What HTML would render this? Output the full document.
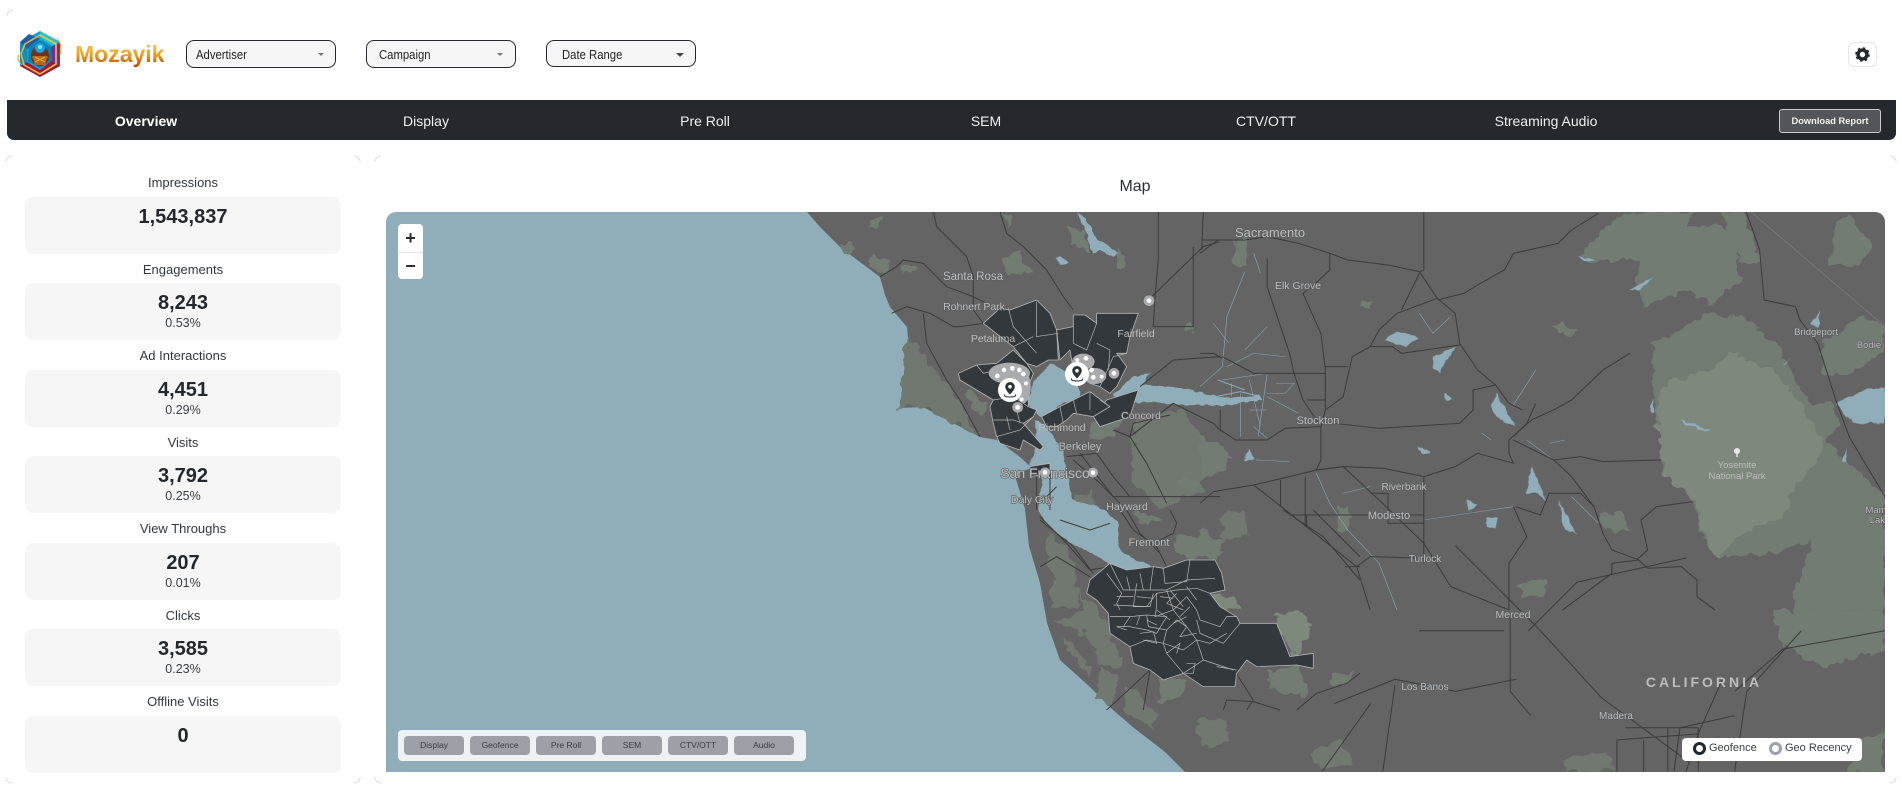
<!DOCTYPE html>
<html lang="en"><head><meta charset="utf-8"><title>Mozayik</title>
<style>
*{box-sizing:border-box}
html,body{margin:0;padding:0;background:#fff}
body{width:1902px;height:793px;position:relative;overflow:hidden;font-family:"Liberation Sans",sans-serif;color:#2b2f33}
.abs{position:absolute}
.dd{position:absolute;top:40px;width:150px;height:28px;background:#f6f6f6;border:1px solid #24272b;border-radius:8px}
.dd span{position:absolute;top:6px;font-size:13px;line-height:15px;color:#222;transform:scaleX(.87);transform-origin:left center;white-space:nowrap}
.dd i{position:absolute;top:12px;width:0;height:0;border-left:3px solid transparent;border-right:3px solid transparent;border-top:3px solid #777}
#nav{position:absolute;left:7px;top:100px;width:1889px;height:40px;background:#25292d;border-radius:0 0 7px 7px}
.n{position:absolute;top:113px;transform:translateX(-50%);font-size:14px;line-height:17px;color:#eef0f1;white-space:nowrap}
#dl{position:absolute;left:1779px;top:109px;width:102px;height:24px;background:#53575b;border:1px solid #c9cbcd;border-radius:3px;color:#f2f2f2;font-size:9.3px;font-weight:bold;text-align:center;line-height:23px;white-space:nowrap}
#gear{position:absolute;left:1848px;top:42px;width:29px;height:25px;border:1px solid #e6e6e6;border-radius:6px;background:#fff}
.lab{position:absolute;left:25px;width:316px;text-align:center;font-size:13px;line-height:16px;color:#33373b}
.card{position:absolute;left:25px;width:316px;height:57px;background:#f6f6f6;border-radius:8px;text-align:center}
.card b{position:absolute;left:0;right:0;top:9px;font-size:20px;line-height:22px;color:#24272b}
.card span{position:absolute;left:0;right:0;top:33px;font-size:12.5px;line-height:15px;color:#3a3e42}
#title{position:absolute;left:1035px;width:200px;top:177px;text-align:center;font-size:16px;line-height:19px;color:#2b2f33}
#map{position:absolute;left:386px;top:212px;width:1499px;height:560px;overflow:hidden;border-radius:10px 10px 0 0;background:#90aeb9}
#map svg{position:absolute;left:0;top:0;display:block}
.land{fill:#646464}.wat{fill:#90aeb9}
.f1{fill:#727c72}.f2{fill:#7e887c}
.f0{fill:#6f786f}
.r{fill:none;stroke:#3b3b3b;stroke-width:1;vector-effect:non-scaling-stroke;stroke-linejoin:round}
.wl{fill:none;stroke:#90aeb9;stroke-width:1.3;vector-effect:non-scaling-stroke}
.dk{fill:#33383c;stroke:#b4b6b7;stroke-width:.8;vector-effect:non-scaling-stroke;stroke-linejoin:round}
.il{fill:none;stroke:#b4b6b7;stroke-width:.7;vector-effect:non-scaling-stroke}
text{font-family:"Liberation Sans",sans-serif;fill:#bdbdbd;text-anchor:middle;paint-order:stroke;stroke:#5a5c5e;stroke-width:1.2px}
#zc{position:absolute;left:398px;top:224px;width:25px;height:55px;background:#fff;border-radius:4px}
#zc div{position:absolute;left:0;width:25px;text-align:center;font-weight:bold;font-size:18px;color:#2b2b2b}
#fb{position:absolute;left:398px;top:730px;width:408px;height:31px;background:#eef2f4;border-radius:4px}
#fb div{position:absolute;top:6px;width:60px;height:19px;background:#9da0a6;border-radius:4px;text-align:center;font-size:8.5px;line-height:19px;color:#3a3d42}
#lg{position:absolute;left:1682px;top:738px;width:180px;height:23px;background:#fff;border-radius:4px;font-size:11px;color:#3a4048}
#lg i{position:absolute;top:4px;width:13px;height:13px;border-radius:50%;background:#fff}
#lg span{position:absolute;top:3px;line-height:14px;white-space:nowrap}
</style></head><body>

<svg class="abs" style="left:0;top:0" width="1902" height="793" fill="none" stroke="#dcdcdc" stroke-width="1">
<path d="M7,16a6,6 0 0 1 6,-6"/>
<path d="M6,162a6,6 0 0 1 6,-6"/><path d="M354,156a6,6 0 0 1 6,6"/><path d="M6,777a6,6 0 0 0 6,6"/><path d="M360,777a6,6 0 0 1 -6,6"/>
<path d="M375,162a6,6 0 0 1 6,-6"/><path d="M1890,156a6,6 0 0 1 6,6"/><path d="M375,777a6,6 0 0 0 6,6"/><path d="M1896,777a6,6 0 0 1 -6,6"/>
</svg>

<svg class="abs" style="left:15px;top:29px" width="50" height="50" viewBox="0 0 50 50">
<path d="M25,2L45,13L45,37L25,48L5,37L5,13Z" fill="#10a3d6"/>
<path d="M25,2L45,13L38,17L25,9Z" fill="#25c0d8"/>
<path d="M5,13L14,5L25,10L12,20Z" fill="#1c5fa8"/>
<path d="M5,37L25,48L45,37L36,32L25,41L12,33Z" fill="#a3163f"/>
<path d="M5,13L12,20L12,33L5,37Z" fill="#0e8ec4"/>
<path d="M45,13L36,18L36,32L45,37Z" fill="#7b2a8f"/>
<path d="M14,19L25,11L36,18L37,31L25,39L13,32Z" fill="#0d7fb0"/>
<ellipse cx="25" cy="27" rx="9" ry="10" fill="#6e3318"/>
<circle cx="25" cy="19" r="5" fill="#1aa6e4"/>
<circle cx="25" cy="18" r="2" fill="#8fe0fa"/>
<path d="M17,27L33,27L30,36L20,36Z" fill="#b5651d"/>
<path d="M20,28L30,33M30,28L20,33" stroke="#e4a93a" stroke-width="1.2"/>
<path d="M25,45L9,36L6,25L10,15L25,6" fill="none" stroke="#f0b429" stroke-width="1.6"/>
<path d="M25,6L41,15L41,35L25,45" fill="none" stroke="#e8c63a" stroke-width="1.6"/>
<path d="M4,26Q1,30 7,36M42,10Q48,16 45,26" fill="none" stroke="#e8a321" stroke-width="1.1"/>
</svg>
<div class="abs" style="left:75px;top:41px;font-size:23px;line-height:26px;font-weight:bold;white-space:nowrap;background:linear-gradient(#fbd060,#ee9a1c 55%,#a84a08);-webkit-background-clip:text;background-clip:text;color:transparent">Mozayik</div>

<div class="dd" style="left:186px"><span style="left:9px">Advertiser</span><i style="left:131px"></i></div>
<div class="dd" style="left:366px"><span style="left:12px">Campaign</span><i style="left:130px"></i></div>
<div class="dd" style="left:546px;height:27px"><span style="left:15px">Date Range</span><i style="left:129px;border-left-width:4px;border-right-width:4px;border-top:4px solid #444"></i></div>

<div id="gear"><svg width="27" height="23" viewBox="0 0 27 23" style="display:block"><circle cx="13.5" cy="11.5" r="4.4" fill="none" stroke="#25282c" stroke-width="3.4"/><circle cx="13.5" cy="11.5" r="6.4" fill="none" stroke="#25282c" stroke-width="1.8" stroke-dasharray="2.5 2.53"/></svg></div>

<div id="nav"></div>
<div class="n" style="left:146px;font-weight:bold;color:#fff">Overview</div>
<div class="n" style="left:426px">Display</div>
<div class="n" style="left:705px">Pre Roll</div>
<div class="n" style="left:986px">SEM</div>
<div class="n" style="left:1266px">CTV/OTT</div>
<div class="n" style="left:1546px">Streaming Audio</div>
<div id="dl">Download Report</div>

<div class="lab" style="top:175px">Impressions</div>
<div class="card" style="top:197px"><b>1,543,837</b></div>
<div class="lab" style="top:262px">Engagements</div>
<div class="card" style="top:283px"><b>8,243</b><span>0.53%</span></div>
<div class="lab" style="top:348px">Ad Interactions</div>
<div class="card" style="top:370px"><b>4,451</b><span>0.29%</span></div>
<div class="lab" style="top:435px">Visits</div>
<div class="card" style="top:456px"><b>3,792</b><span>0.25%</span></div>
<div class="lab" style="top:521px">View Throughs</div>
<div class="card" style="top:543px"><b>207</b><span>0.01%</span></div>
<div class="lab" style="top:608px">Clicks</div>
<div class="card" style="top:629px"><b>3,585</b><span>0.23%</span></div>
<div class="lab" style="top:694px">Offline Visits</div>
<div class="card" style="top:716px"><b>0</b></div>

<div id="title">Map</div>

<div id="map">
<svg width="1499" height="560" viewBox="386 212 1499 560" style="filter:blur(.35px)">
<defs>
<filter id="rough" filterUnits="userSpaceOnUse" x="386" y="212" width="1499" height="560">
<feTurbulence type="fractalNoise" baseFrequency=".09" numOctaves="2" seed="4"/>
<feDisplacementMap in="SourceGraphic" scale="14" xChannelSelector="R" yChannelSelector="G"/>
</filter>
<filter id="rough2" filterUnits="userSpaceOnUse" x="386" y="212" width="1499" height="560">
<feTurbulence type="fractalNoise" baseFrequency=".12" numOctaves="2" seed="9"/>
<feDisplacementMap in="SourceGraphic" scale="5" xChannelSelector="R" yChannelSelector="G"/>
</filter>
</defs>
<!-- land -->
<polygon class="land" points="807,212 820,227 840,247 860,262 880,277 885,295 890,307 907,327 908,338 900,408 923,407 953,423 980,437 997,440 1020,457 1032,468 1020,472 1016,479 1025,509 1029,546 1040,583 1047,623 1060,660 1090,687 1113,710 1134,728 1165,752 1185,772 1885,772 1885,212"/>

<!-- forests -->
<g filter="url(#rough)">
<g transform="scale(1.213)">
<polygon class="f0" points="862,440 880,450 888,480 874,490 866,465"/>
<polygon class="f0" points="892,490 915,515 925,550 908,548 895,520"/>
<polygon class="f0" points="930,565 955,590 948,600 925,585"/>
<polygon class="f0" points="985,595 1010,590 1015,612 990,615"/>
<polygon class="f0" points="935,345 975,338 1000,370 990,405 955,420 932,395"/>
<polygon class="f0" points="1005,425 1025,420 1030,440 1008,445"/>
<polygon class="f0" points="1080,620 1105,610 1115,630 1090,634"/>
<polygon class="f0" points="1290,625 1325,620 1330,636 1290,636"/>
<polygon class="f1" points="1530,610 1554,605 1554,636 1525,636"/>
<polygon class="f0" points="1000,536 1025,532 1025,552 1005,556"/>
<polygon class="f0" points="880,412 900,405 908,435 888,440"/>
<polygon class="f1" points="1460,503 1554,503 1554,535 1500,550 1470,530"/>
</g>

<g transform="translate(1200,210) scale(.4477,.3333)">
<polygon class="f1" points="1010,400 1060,370 1130,310 1210,320 1290,400 1350,560 1430,640 1400,690 1430,740 1500,820 1530,860 1530,1200 1320,1200 1370,980 1300,1030 1160,1040 1120,980 1100,860 1030,780 1010,520"/>
<polygon class="f2" points="1025,560 1050,510 1130,490 1190,430 1290,490 1330,560 1395,690 1370,770 1330,830 1300,920 1200,980 1160,1040 1125,990 1110,880 1040,800 1020,680"/>
<polygon class="f1" points="850,150 880,80 950,10 1100,5 1090,50 1180,50 1200,130 1210,210 1140,280 1090,240 990,290 975,200 980,150"/>
<polygon class="f1" points="1160,5 1215,5 1250,150 1210,155"/>
<polygon class="f1" points="1420,40 1450,15 1500,100 1480,170 1410,160"/>
<polygon class="f1" points="1380,420 1470,320 1530,340 1530,420 1450,490 1400,500"/>
<polygon class="f1" points="78,90 105,90 105,165 78,165"/>
<polygon class="f1" points="0,670 40,700 70,740 30,800 0,800"/>
<polygon class="f1" points="0,960 50,990 40,1050 0,1040"/>
<polygon class="f1" points="790,340 845,355 830,380 800,365"/>
<polygon class="f1" points="890,915 940,900 965,960 900,965"/>
<polygon class="f1" points="710,1125 770,1105 770,1160 725,1160"/>
<polygon class="f1" points="1350,585 1410,570 1420,640 1385,670"/>
<polygon class="f1" points="365,280 380,280 380,295 365,295"/>
<polygon class="f1" points="305,880 330,900 330,965 310,965"/>
</g>

<g transform="translate(780,210) scale(.3333)">
<polygon class="f0" points="385,385 500,520 600,680 520,640 430,590 360,595"/>
<polygon class="f1" points="660,140 720,130 750,190 690,200"/>
<polygon class="f1" points="860,50 900,60 940,130 880,100"/>
<polygon class="f1" points="180,105 220,105 215,130 190,130"/>
<polygon class="f1" points="360,170 410,165 405,185 370,190"/>
<polygon class="f1" points="270,130 330,160 320,190 270,170"/>
<polygon class="f1" points="280,25 300,25 300,50 280,50"/>
<polygon class="f1" points="660,5 700,10 690,60"/>
<polygon class="f1" points="930,640 1030,630 1000,690 940,680"/>
<polygon class="f1" points="1000,120 1040,140 1030,180 1005,170"/>
<polygon class="f1" points="1215,340 1235,340 1235,365 1215,365"/>
<polygon class="f1" points="560,540 620,580 610,610 580,600"/>
<polygon class="f1" points="1200,800 1260,810 1250,840 1210,840"/>
</g>

<g transform="translate(1040,510) scale(.3333)">
<polygon class="f1" points="400,80 500,80 550,130 440,150 400,120"/>
<polygon class="f1" points="280,5 370,20 320,45"/>
<polygon class="f2" points="490,230 540,260 590,265 595,295 530,305 500,270"/>
<polygon class="f2" points="700,310 790,305 815,350 765,450 740,400"/>
<polygon class="f0" points="30,200 130,240 100,300 40,300"/>
<polygon class="f0" points="40,330 140,300 175,360 120,370"/>
<polygon class="f0" points="70,390 130,430 160,510 95,440"/>
<polygon class="f0" points="180,470 230,500 220,590 170,560"/>
<polygon class="f1" points="360,515 440,510 430,560 360,575"/>
<polygon class="f1" points="680,490 780,470 800,555 700,540"/>
<polygon class="f1" points="870,490 940,490 920,520 880,520"/>
</g>
</g>

<!-- water -->
<g filter="url(#rough2)">
<g class="wat">
<polygon points="1050,363 1077,377 1080,397 1057,407 1053,417 1040,417 1027,403 1033,383"/>
<polygon points="1030,468 1040,470 1042,480 1038,510 1052,530 1075,545 1100,558 1118,570 1140,580 1155,578 1150,565 1125,555 1118,545 1120,525 1105,510 1090,505 1072,500 1067,470 1062,450 1045,425 1035,420 1036,445"/>
<polygon points="1113,395 1133,377 1150,373 1143,385 1180,388 1200,392 1225,398 1260,395 1262,400 1225,406 1170,404 1130,402"/>
<polygon points="1077,213 1086,218 1098,240 1118,252 1114,257 1100,250 1092,254 1088,236"/>
<polygon points="1055,258 1062,256 1068,263 1060,265"/>
</g>
<g transform="translate(1200,210) scale(.4477,.3333)">
<g class="wat">
<polygon points="410,390 440,365 490,380 460,410"/>
<polygon points="520,440 570,410 535,490 520,470"/>
<polygon points="650,590 660,550 705,650 670,630"/>
<polygon points="730,850 740,770 775,870 750,850"/>
<polygon points="800,870 840,970 815,960"/>
<polygon points="1420,580 1480,540 1530,530 1530,640 1460,640"/>
<polygon points="485,710 515,725 495,735"/>
<polygon points="545,550 565,565 550,575"/>
<polygon points="595,870 620,885 600,905"/>
<polygon points="640,925 665,925 660,955 640,950"/>
<polygon points="100,750 120,750 110,715"/>
<polygon points="1365,345 1385,305 1380,350"/>
<polygon points="1075,630 1140,660 1130,665 1080,640"/>
<polygon points="960,240 1015,200 985,240"/>
<polygon points="1005,600 1015,565 1015,610"/>
<polygon points="845,140 885,150 860,155"/>
<polygon points="1300,465 1325,440 1305,463"/>
<polygon points="1435,760 1445,715 1445,760"/>
</g>
</g>
</g>
<g transform="translate(1200,210) scale(.4477,.3333)">
<g class="wl">
<path d="M100,185L60,320L50,470L0,530"/>
<path d="M120,130L135,190M30,340L65,400"/>
<path d="M50,510L150,490L130,680M90,550L90,680M110,510L135,650M150,560L220,610M120,650L150,685M60,470L120,430L190,440M100,420L150,350M70,560L70,520M110,600L150,600M170,520L210,520L190,550L150,550"/>
<path d="M0,570L90,545L135,560M40,510L100,540" style="stroke-width:3"/>
<path d="M490,310L520,370L560,320M730,690L790,750M700,585L750,480M650,690L630,670M780,700L815,690"/>
<path d="M260,790L290,880L330,960L400,1060L440,1200M500,930L600,910L700,890M830,860L890,940M320,850L380,830M125,750L200,755"/>
</g>
</g>

<!-- roads -->
<g transform="translate(1200,210) scale(.4477,.3333)">
<path class="r" d="M500,5L500,180L490,185L420,165L330,150L290,130L220,100L150,80L100,90L40,90L0,130"/>
<path class="r" d="M290,130L290,180L250,230L230,250L270,370L280,480L280,600L270,650L270,750L260,780L200,800L120,825L30,845L0,880"/>
<path class="r" d="M150,145L150,230L200,430L210,490L230,570L265,640"/>
<path class="r" d="M490,185L530,265L570,310L580,400L620,480L660,525L690,580L720,600"/>
<path class="r" d="M530,265L440,310L400,360L380,410M490,190L450,300"/>
<path class="r" d="M890,10L830,60L800,100L700,130L680,180L620,225L590,250L530,270"/>
<path class="r" d="M580,405L450,430L430,410L380,410L340,440L320,560L280,600"/>
<path class="r" d="M300,640L400,655L580,640L610,600L610,540L660,525"/>
<path class="r" d="M960,430L900,480L830,570L790,600L740,630L690,690L690,730L700,760L620,730L570,770L500,800L410,775L320,770L260,780"/>
<path class="r" d="M750,580L730,640L700,680"/>
<path class="r" d="M790,750L850,740L900,755L1030,750"/>
<path class="r" d="M700,690L790,750L830,800L880,890L900,970L920,1020L980,1050L1000,1075L1075,1070L1110,1110L1110,1160L1150,1200"/>
<path class="r" d="M1100,875L1020,890L985,930L1000,1020L975,1050"/>
<path class="r" d="M1220,5L1250,120L1260,270L1330,290L1340,330L1380,400L1420,570L1450,680L1490,770L1530,860"/>
<path class="r" d="M980,1050L920,1060L920,1090L810,1200"/>
<path class="r" d="M260,780L320,770L400,870L500,1000L560,1130L690,1200"/>
<path class="r" d="M120,825L200,910L350,1070L380,1200"/>
<path class="r" d="M350,1070L380,1040L500,1045L500,1000M500,800L500,1060"/>
<path class="r" d="M200,915L500,915M420,850L420,940L500,940M380,850L420,850"/>
<path class="r" d="M700,890L730,980L690,1060L690,1200"/>
<path class="r" d="M235,800L235,950M180,810L180,890"/>
<path class="r" d="M50,440L120,490L280,490M0,430L30,430L50,445M240,570L280,570M280,470L330,470M45,600L45,660L80,690L150,690L190,655L270,650"/>
<path class="r" d="M705,890L760,915L780,850L850,850L880,890"/>
<path fill="none" stroke="#7c7c7c" stroke-width=".7" vector-effect="non-scaling-stroke" d="M1230,5L1530,350"/>
</g>
<g transform="translate(780,210) scale(.3333)">
<path class="r" d="M460,5L470,50L560,140L580,200L580,300L610,340"/>
<path class="r" d="M660,5L680,70L730,110L800,180L850,260L880,300"/>
<path class="r" d="M1105,270L1270,110L1320,95M1135,5L1135,150L1125,260L1120,350L1240,350L1240,110M1270,5L1265,120M1265,90L1320,90"/>
<path class="r" d="M300,200L350,170L370,150L430,160L480,210L500,230L580,260L640,290"/>
<path class="r" d="M335,310L380,290L450,310L520,350L540,350L610,340"/>
<path class="r" d="M430,310L440,400L500,510L540,570L600,680"/>
<path class="r" d="M1000,660L1050,680L1100,760L1160,880M1320,660L1300,640L1180,580L1050,680L1060,640L1170,615M1080,530L1180,450L1320,440"/>
<path class="r" d="M860,740L950,730L1000,800L1050,860M880,750L960,820L1020,880M900,730L1000,860M810,780L810,900M770,800L770,900M1000,860L1320,860M830,830L780,880"/>
</g>
<g transform="translate(1040,510) scale(.3333)">
<path class="r" d="M0,20L80,100L150,180L210,170M0,30L100,110L160,190M0,170L50,140L150,200M210,40L150,60L60,30M240,0L280,60L350,110L380,170M260,0L300,70L360,130M390,0L410,40L400,70L340,100"/>
<path class="r" d="M730,0L850,80L960,210M750,15L960,15M800,15L800,50M820,0L960,140M915,170L960,170M530,400L640,570L620,600M200,600L330,480M330,480L310,600M550,600L560,570L640,575L720,600M770,600L830,550L920,520L960,490"/>
</g>
<g transform="scale(1.213)">
<path class="r" d="M1200,450L1270,520L1320,575L1392,628M1245,505L1245,570L1262,590M1170,520L1240,520M1260,520L1300,480L1390,460"/>
<path class="r" d="M1430,636L1440,570L1485,520M1333,636L1333,610L1400,605L1420,560M1400,605L1390,636"/>
<path class="r" d="M1150,565L1140,636M1090,636L1130,580M1100,580L1150,560L1200,570L1250,560M1380,636L1385,600L1430,590M1430,570L1470,535L1554,520"/>
<path class="r" d="M1340,600L1400,600L1400,636M1355,610L1355,636M1375,600L1375,636"/>
</g>

<!-- dark regions north -->
<g transform="translate(780,210) scale(.3333)">
<path class="dk" d="M610,340L660,295L690,300L770,270L810,310L830,360L835,450L805,450L770,470L740,460L700,410Z"/>
<path class="dk" d="M535,490L590,465L650,460L700,420L740,460L760,490L745,530L745,590L770,600L760,620L730,640L790,710L780,720L730,690L720,720L660,700L650,680L640,640L630,590L640,570L590,540L540,510Z"/>
<path class="dk" d="M830,360L880,350L880,315L915,315L950,340L950,310L1075,310L1050,380L1040,430L1010,430L1040,470L1010,530L990,550L960,530L930,520L880,480L870,420L840,450Z"/>
<path class="dk" d="M1075,540L1050,620L1020,630L960,650L940,620L980,570Z"/>
<path class="dk" d="M785,620L840,590L880,570L930,545L990,590L940,620L880,610L860,630L830,650L800,650Z"/>
<path class="dk" d="M750,770L810,760L810,790L750,800Z"/>
<path class="il" d="M685,295L700,350L770,430M770,275L770,380L835,370M700,410L760,380M590,465L610,490L650,480M640,570L700,560L745,590M640,630L700,630L730,640M650,680L720,660L760,620M680,620L690,660M710,600L720,640"/>
<path class="il" d="M880,350L880,400L920,420L950,340M950,400L990,420L985,480M960,530L1000,440L1040,430M880,570L890,610M930,545L930,600M960,570L990,590M840,590L850,640"/>
</g>

<!-- dark region south -->
<g transform="translate(1040,510) scale(.3333)">
<path class="dk" d="M210,160L260,180L340,170L370,175L440,150L525,150L545,190L555,240L510,250L540,290L590,320L600,340L710,340L750,440L820,430L820,475L770,465L650,470L620,450L590,490L585,530L490,530L430,490L370,510L330,480L280,460L270,410L210,370L205,310L170,270L140,250L150,210Z"/>
<path class="il" d="M210,160L250,240L330,240L380,240L440,210L525,205M200,190L245,250L230,280L240,300M290,220L280,290L330,290L340,250M340,170L330,240M370,175L375,220L440,215L450,150"/>
<path class="il" d="M220,285L320,290L350,250L410,240L470,235L510,250M350,250L350,290L345,320L400,300L440,260L470,300L480,330L540,350L560,320L590,320M380,240L400,300L440,350L470,390L510,400L560,370"/>
<path class="il" d="M210,320L270,320L320,315L380,320L350,370L320,360L270,350L230,350L260,360M270,320L250,350M320,315L325,350L380,360L410,330L440,350L420,380L470,370M380,360L370,400L430,420L470,390"/>
<path class="il" d="M270,410L320,390L370,400L380,430L420,400L410,430M470,390L490,450L430,490M490,450L580,480M380,430L430,490M470,330L480,370L550,400L600,340"/>
<path class="il" d="M440,460L465,460L460,490L435,490M530,470L590,480M300,370L340,365L350,400L310,390"/>
<path class="il" d="M260,200L270,240M300,190L310,240M230,260L280,260M290,260L340,265M360,260L400,265M390,240L430,290M410,250L380,280M440,230L470,270M380,280L430,300M350,300L390,330M450,290L420,320M400,340L440,320M320,330L350,345M300,315L290,345"/>
</g>

<!-- labels -->
<text x="1270" y="237" font-size="13">Sacramento</text>
<text x="1298" y="289" font-size="10.5" fill="#a4a4a4">Elk Grove</text>
<text x="1318" y="424" font-size="11" fill="#c0c0c0">Stockton</text>
<text x="1404" y="490" font-size="10" fill="#969696">Riverbank</text>
<text x="1389" y="519" font-size="11" fill="#c0c0c0">Modesto</text>
<text x="1425" y="562" font-size="10" fill="#969696">Turlock</text>
<text x="1737" y="468" font-size="9.5" fill="#b4b8b0" style="stroke:none">Yosemite</text>
<text x="1737" y="479" font-size="9.5" fill="#b4b8b0" style="stroke:none">National Park</text>
<circle cx="1737" cy="451" r="3" fill="#e8e8e8"/><rect x="1736.3" y="453" width="1.4" height="4" fill="#e8e8e8"/>
<text x="1816" y="335" font-size="9.5" fill="#999">Bridgeport</text>
<text x="1869" y="348" font-size="9.5" fill="#999">Bodie</text>
<text x="1880" y="513" font-size="9.5" fill="#999">Mamm</text>
<text x="1880" y="523" font-size="9.5" fill="#999">Lake</text>
<text x="973" y="280" font-size="11.5" fill="#b8b8b8">Santa Rosa</text>
<text x="974" y="310" font-size="10.5" fill="#9a9a9a">Rohnert Park</text>
<text x="993" y="342" font-size="10.5" fill="#8e8e8e" style="stroke:none">Petaluma</text>
<text x="1136" y="337" font-size="10.5" fill="#808080" style="stroke:none">Fairfield</text>
<text x="1141" y="419" font-size="10.5" fill="#a4a4a4">Concord</text>
<text x="1062" y="431" font-size="10.5" fill="#777" style="stroke:none">Richmond</text>
<text x="1080" y="450" font-size="11" fill="#a8a8a8">Berkeley</text>
<text x="1045" y="478" font-size="14" fill="#c4c4c4">San Francisco</text>
<text x="1032" y="503" font-size="10.5" fill="#8e8e8e">Daly City</text>
<text x="1127" y="510" font-size="10.5" fill="#b0b0b0">Hayward</text>
<text x="1149" y="546" font-size="11" fill="#b0b0b0">Fremont</text>
<text x="1425" y="690" font-size="10" fill="#9a9a9a">Los Banos</text>
<text x="1616" y="719" font-size="10" fill="#9a9a9a">Madera</text>
<text x="1513" y="618" font-size="10.5" fill="#a4a4a4">Merced</text>
<text x="1704" y="687" font-size="14" font-weight="bold" letter-spacing="3" fill="#8f8f8f" style="stroke:none">CALIFORNIA</text>

<!-- markers -->
<g transform="translate(920,270) scale(.3333)">
<g fill="#a9abae">
<ellipse cx="268" cy="310" rx="62" ry="32"/><ellipse cx="310" cy="350" rx="22" ry="50"/>
<ellipse cx="490" cy="275" rx="34" ry="24"/><ellipse cx="525" cy="318" rx="34" ry="24"/>
<circle cx="293" cy="412" r="16"/><circle cx="375" cy="607" r="15"/><circle cx="519" cy="608" r="15"/><circle cx="582" cy="310" r="16"/><circle cx="687" cy="92" r="16"/>
</g>
<g fill="#fff">
<circle cx="232" cy="318" r="7"/><circle cx="252" cy="300" r="7"/><circle cx="277" cy="295" r="7"/><circle cx="298" cy="300" r="7"/><circle cx="310" cy="312" r="7"/><circle cx="318" cy="340" r="6"/><circle cx="305" cy="388" r="6"/><circle cx="293" cy="412" r="7"/><circle cx="375" cy="607" r="7"/><circle cx="519" cy="608" r="7"/><circle cx="582" cy="310" r="7"/><circle cx="687" cy="92" r="7"/><circle cx="472" cy="270" r="6"/><circle cx="498" cy="265" r="7"/><circle cx="515" cy="300" r="7"/><circle cx="520" cy="322" r="7"/><circle cx="545" cy="320" r="6"/>
</g>
</g>
<g transform="translate(1010,390)">
<circle r="12" fill="#fff"/>
<path d="M0,-8a4.8,4.8 0 0 1 4.8,4.8c0,3.2 -4.8,7.7 -4.8,7.7s-4.8,-4.5 -4.8,-7.7a4.8,4.8 0 0 1 4.8,-4.8z" fill="#2f3336"/><circle cy="-3.3" r="1.8" fill="#fff"/>
<path d="M-5.5,4.5q-1,2.5 5.5,2.5t5.5,-2.5" fill="none" stroke="#2f3336" stroke-width="1.1"/>
</g>
<g transform="translate(1077,374)">
<circle r="12" fill="#fff"/>
<path d="M0,-8a4.8,4.8 0 0 1 4.8,4.8c0,3.2 -4.8,7.7 -4.8,7.7s-4.8,-4.5 -4.8,-7.7a4.8,4.8 0 0 1 4.8,-4.8z" fill="#2f3336"/><circle cy="-3.3" r="1.8" fill="#fff"/>
<path d="M-5.5,4.5q-1,2.5 5.5,2.5t5.5,-2.5" fill="none" stroke="#2f3336" stroke-width="1.1"/>
</g>
</svg>
</div>

<div id="zc">
<div style="top:3px;line-height:22px">+</div>
<div style="top:28px;height:1px;background:#e4e4e4"></div>
<div style="top:31px;line-height:22px">&#8722;</div>
</div>

<div id="fb">
<div style="left:6px">Display</div><div style="left:72px">Geofence</div><div style="left:138px">Pre Roll</div><div style="left:204px">SEM</div><div style="left:270px">CTV/OTT</div><div style="left:336px">Audio</div>
</div>

<div id="lg">
<i style="left:11px;border:3.5px solid #22272e"></i><span style="left:27px">Geofence</span>
<i style="left:87px;border:3.5px solid #9da0a6"></i><span style="left:103px">Geo Recency</span>
</div>

</body></html>
